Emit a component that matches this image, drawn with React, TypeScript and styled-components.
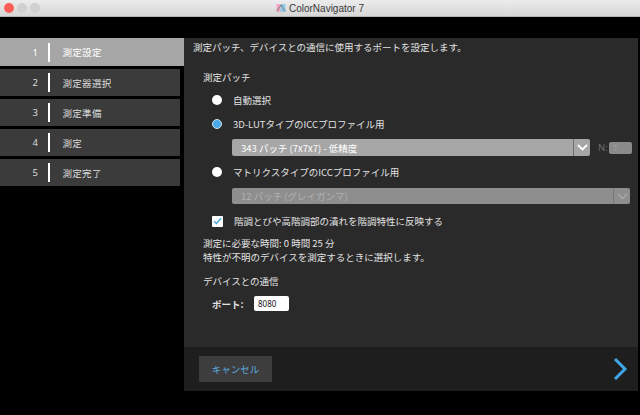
import React, { useState } from 'react'
import styled, { createGlobalStyle } from 'styled-components'

const GlobalStyle = createGlobalStyle`
  html, body {
    margin: 0;
    padding: 0;
    background: #000;
  }
  body {
    font-family: "Noto Sans CJK JP", "Noto Sans", sans-serif;
    color: #e2e2e2;
  }
`

const steps = ['測定設定', '測定器選択', '測定準備', '測定', '測定完了']

const App = () => {
  const [active] = useState(0)
  const [patch, setPatch] = useState<'auto' | 'lut' | 'matrix'>('lut')
  const [reflect, setReflect] = useState(true)

  return (
    <Window>
      <GlobalStyle />
      <TitleBar>
        <Lights>
          <Light color="#fc5f57" />
          <Light color="#d0d0d0" />
          <Light color="#d0d0d0" />
        </Lights>
        <Title>
          <AppIcon viewBox="0 0 10 10">
            <rect x="0.5" y="1" width="4" height="8" fill="#f2a7c8" />
            <rect x="4.5" y="1" width="5" height="8" fill="#8fc9e8" />
            <path d="M1 8 L5 2 L9 8" stroke="#7a7a7a" strokeWidth="1" fill="none" />
          </AppIcon>
          ColorNavigator 7
        </Title>
      </TitleBar>
      <ToolStrip />
      <Body>
        <Sidebar>
          {steps.map((s, i) => (
            <Step key={s} $active={i === active}>
              <StepNo>{i + 1}</StepNo>
              <StepBar />
              <StepName>{s}</StepName>
            </Step>
          ))}
        </Sidebar>
        <Main>
          <Content>
            <Intro>測定パッチ、デバイスとの通信に使用するポートを設定します。</Intro>
            <Heading style={{ marginTop: 12 }}>測定パッチ</Heading>
            <OptionRow $top={5} onClick={() => setPatch('auto')}>
              <Radio $on={patch === 'auto'} />
              <span>自動選択</span>
            </OptionRow>
            <OptionRow $top={6} onClick={() => setPatch('lut')}>
              <Radio $on={patch === 'lut'} />
              <span>3D-LUTタイプのICCプロファイル用</span>
            </OptionRow>
            <SelectRow $top={6}>
              <Select $width={358}>
                <SelectText>343 パッチ (7x7x7) - 低精度</SelectText>
                <Chevron $dim={false}>
                  <svg width="11" height="7" viewBox="0 0 11 7">
                    <path d="M1 1 L5.5 5.5 L10 1" stroke="#fff" strokeWidth="1.8" fill="none" />
                  </svg>
                </Chevron>
              </Select>
              <NLabel>N:</NLabel>
              <NBox>7</NBox>
            </SelectRow>
            <OptionRow $top={7} onClick={() => setPatch('matrix')}>
              <Radio $on={patch === 'matrix'} />
              <span>マトリクスタイプのICCプロファイル用</span>
            </OptionRow>
            <SelectRow $top={7}>
              <Select $width={398} $disabled>
                <SelectText>12 パッチ (グレイガンマ)</SelectText>
                <Chevron $dim>
                  <svg width="11" height="7" viewBox="0 0 11 7">
                    <path d="M1 1 L5.5 5.5 L10 1" stroke="#a8a8a8" strokeWidth="1.4" fill="none" />
                  </svg>
                </Chevron>
              </Select>
            </SelectRow>
            <OptionRow $top={8} onClick={() => setReflect(!reflect)}>
              <Check>
                {reflect && (
                  <svg width="9" height="8" viewBox="0 0 9 8">
                    <path d="M1 4.2 L3.4 6.5 L8 1.2" stroke="#49a7e4" strokeWidth="1.5" fill="none" />
                  </svg>
                )}
              </Check>
              <span>階調とびや高階調部の潰れを階調特性に反映する</span>
            </OptionRow>
            <Note>
              測定に必要な時間: 0 時間 25 分
              <br />
              特性が不明のデバイスを測定するときに選択します。
            </Note>
            <Heading style={{ marginTop: 8 }}>デバイスとの通信</Heading>
            <PortRow>
              <PortLabel>ポート:</PortLabel>
              <PortInput defaultValue="8080" />
            </PortRow>
          </Content>
          <Footer>
            <CancelButton>キャンセル</CancelButton>
            <NextArrow width="16" height="24" viewBox="0 0 16 24">
              <path d="M3 2 L13 12 L3 22" stroke="#3fa7e8" strokeWidth="3" fill="none" />
            </NextArrow>
          </Footer>
        </Main>
      </Body>
    </Window>
  )
}

const Window = styled.div`
  width: 640px;
  height: 415px;
  display: flex;
  flex-direction: column;
  background: #000;
  overflow: hidden;
`

const TitleBar = styled.div`
  height: 16px;
  flex-shrink: 0;
  display: flex;
  align-items: center;
  position: relative;
  background: linear-gradient(#ececec, #d6d6d6);
  border-bottom: 1px solid #b4b4b4;
`

const Lights = styled.div`
  display: flex;
  gap: 3px;
  padding-left: 4px;
`

const Light = styled.span<{ color: string }>`
  width: 10px;
  height: 10px;
  border-radius: 50%;
  background: ${p => p.color};
`

const Title = styled.div`
  position: absolute;
  left: 0;
  right: 0;
  top: 0;
  bottom: 0;
  display: flex;
  align-items: center;
  justify-content: center;
  gap: 3px;
  font-family: "Liberation Sans", Arial, sans-serif;
  font-size: 10px;
  color: #3a3a3a;
  pointer-events: none;
`

const AppIcon = styled.svg`
  width: 10px;
  height: 10px;
`

const ToolStrip = styled.div`
  height: 21px;
  flex-shrink: 0;
  background: #000;
`

const Body = styled.div`
  flex: 1;
  display: flex;
  padding-bottom: 24px;
  padding-right: 3px;
`

const Sidebar = styled.div`
  width: 184px;
  display: flex;
  flex-direction: column;
  gap: 3px;
`

const Step = styled.div<{ $active: boolean }>`
  display: flex;
  align-items: center;
  height: ${p => (p.$active ? 28 : 27)}px;
  width: ${p => (p.$active ? 184 : 180)}px;
  background: ${p => (p.$active ? '#a6a6a6' : '#3b3b3b')};
  color: ${p => (p.$active ? '#ffffff' : '#dcdcdc')};
  font-size: 9.5px;
`

const StepNo = styled.span`
  width: 38px;
  text-align: right;
  font-family: "Noto Sans", sans-serif;
`

const StepBar = styled.span`
  width: 1.5px;
  height: 19px;
  background: #fff;
  margin-left: 10px;
  margin-right: 13px;
`

const StepName = styled.span`
  letter-spacing: 0.3px;
`

const Main = styled.div`
  flex: 1;
  display: flex;
  flex-direction: column;
`

const Content = styled.div`
  flex: 1;
  background: #2a2a2a;
  padding: 0 6px 0 9px;
  font-size: 9.5px;
`

const Intro = styled.div`
  height: 18px;
  line-height: 18px;
`

const Heading = styled.div`
  height: 18px;
  line-height: 18px;
  padding-left: 10px;
`

const OptionRow = styled.div<{ $top: number }>`
  display: flex;
  align-items: center;
  height: 18px;
  margin-top: ${p => p.$top}px;
  padding-left: 19px;
  gap: 11px;
  cursor: pointer;
`

const Radio = styled.span<{ $on: boolean }>`
  width: 10px;
  height: 10px;
  border-radius: 50%;
  box-sizing: border-box;
  background: ${p => (p.$on ? '#4aa9e6' : '#ffffff')};
  border: ${p => (p.$on ? '1.5px solid #cfe3f0' : 'none')};
`

const Check = styled.span`
  width: 11px;
  height: 11px;
  background: #fff;
  border-radius: 1px;
  display: flex;
  align-items: center;
  justify-content: center;
`

const SelectRow = styled.div<{ $top: number }>`
  display: flex;
  align-items: center;
  margin-top: ${p => p.$top}px;
  padding-left: 39px;
`

const Select = styled.div<{ $width: number; $disabled?: boolean }>`
  width: ${p => p.$width}px;
  height: ${p => (p.$disabled ? 16 : 17)}px;
  display: flex;
  align-items: center;
  background: ${p => (p.$disabled ? '#8e8e8e' : '#a6a6a6')};
  color: ${p => (p.$disabled ? '#b0b0b0' : '#ffffff')};
  border-radius: 2px;
`

const SelectText = styled.span`
  flex: 1;
  padding-left: 9px;
`

const Chevron = styled.span<{ $dim: boolean }>`
  width: 16px;
  height: 100%;
  display: flex;
  align-items: center;
  justify-content: center;
  border-left: 1.5px solid ${p => (p.$dim ? '#7a7a7a' : '#6e6e6e')};
`

const NLabel = styled.span`
  margin-left: 8px;
  color: #6a6a6a;
  font-family: "Noto Sans", sans-serif;
`

const NBox = styled.span`
  margin-left: 1px;
  width: 23px;
  height: 12px;
  line-height: 12px;
  background: #8a8a8a;
  border-radius: 2px;
  color: #a0a0a0;
  font-size: 8px;
  padding-left: 4px;
  box-sizing: border-box;
`

const Note = styled.div`
  margin-top: 6px;
  padding-left: 10px;
  line-height: 14px;
`

const PortRow = styled.div`
  display: flex;
  align-items: center;
  height: 17px;
  margin-top: 5px;
  padding-left: 19px;
`

const PortLabel = styled.span`
  font-weight: bold;
  width: 42px;
`

const PortInput = styled.input`
  width: 35px;
  height: 15px;
  box-sizing: border-box;
  border: none;
  border-radius: 2px;
  background: #fff;
  color: #111;
  font-family: "Noto Sans", sans-serif;
  font-size: 8px;
  padding: 0 4px;
  outline: none;
`

const Footer = styled.div`
  height: 44px;
  background: #1e1e1e;
  display: flex;
  align-items: center;
  justify-content: space-between;
  padding: 0 10px 0 15px;
`

const CancelButton = styled.button`
  width: 73px;
  height: 26px;
  background: #3d3d3d;
  border: none;
  color: #5aaee0;
  font-family: "Noto Sans CJK JP", sans-serif;
  font-size: 9.5px;
  cursor: pointer;
`

const NextArrow = styled.svg`
  display: block;
`

export default App
